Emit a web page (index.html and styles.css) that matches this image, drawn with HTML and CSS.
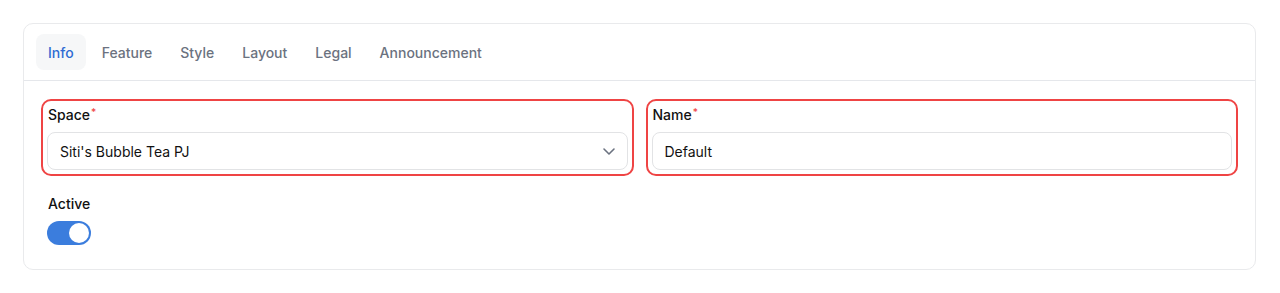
FILE: index.html
```html
<!DOCTYPE html>
<html lang="en">

<head>
    <meta charset="UTF-8">
    <title>Space Settings</title>
    <link rel="stylesheet" href="styles.css">
</head>

<body>

    <div class="card">
        <div class="tabs">
            <button class="tab active">Info</button>
            <button class="tab">Feature</button>
            <button class="tab">Style</button>
            <button class="tab">Layout</button>
            <button class="tab">Legal</button>
            <button class="tab">Announcement</button>
        </div>

        <div class="card-body">
            <div class="field highlight">
                <label class="field-label">Space<span class="req">*</span></label>
                <div class="select">
                    <span>Siti's Bubble Tea PJ</span>
                    <svg width="16" height="16" viewBox="0 0 16 16" fill="none">
                        <path d="M3 6l5 5 5-5" stroke="#6b7280" stroke-width="1.6" stroke-linecap="round" stroke-linejoin="round" />
                    </svg>
                </div>
            </div>

            <div class="field highlight">
                <label class="field-label">Name<span class="req">*</span></label>
                <input class="input" type="text" value="Default">
            </div>

            <div class="field">
                <label class="field-label">Active</label>
                <div class="toggle on"><span class="knob"></span></div>
            </div>
        </div>
    </div>

</body>

</html>
```

FILE: styles.css
```css
* {
    box-sizing: border-box;
}

body {
    font-family: Inter, 'Noto Sans', sans-serif;
    background: #fff;
    margin: 0;
    padding: 23px 24px 0 23px;
    color: #111827;
}

.card {
    background: #fff;
    border: 1px solid #e9eaec;
    border-radius: 10px;
}

.tabs {
    display: flex;
    gap: 4px;
    padding: 10px 12px 10px 12px;
    border-bottom: 1px solid #e5e7eb;
}

.tab {
    font-family: inherit;
    font-size: 14px;
    font-weight: 500;
    height: 36px;
    padding: 0 12px;
    border: none;
    border-radius: 8px;
    background: none;
    color: #6b7280;
    cursor: pointer;
}

.tab.active {
    background: #f6f7f8;
    color: #2f6bd3;
}

.card-body {
    display: grid;
    grid-template-columns: 1fr 1fr;
    gap: 12px;
    padding: 18px 17px 18px 17px;
}

.field {
    display: flex;
    flex-direction: column;
    align-items: flex-start;
    gap: 7px;
    padding: 4px;
    border: 2px solid transparent;
    border-radius: 10px;
}

.field.highlight {
    border-color: #ef4444;
}

.field-label {
    font-size: 14px;
    font-weight: 500;
    line-height: 20px;
    color: #111;
    padding-left: 1px;
}

.req {
    color: #ef4444;
    font-size: 10px;
    vertical-align: top;
    line-height: 14px;
    margin-left: 1px;
}

.select,
.input {
    width: 100%;
    height: 38px;
    border: 1px solid #e2e3e5;
    border-radius: 8px;
    padding: 0 12px;
    font-family: inherit;
    font-size: 14px;
    color: #111;
    background: #fff;
    outline: none;
}

.select {
    display: flex;
    align-items: center;
    justify-content: space-between;
    padding-right: 10px;
}

.toggle {
    width: 44px;
    height: 24px;
    border-radius: 12px;
    background: #d1d5db;
    padding: 2px;
    display: flex;
}

.toggle.on {
    background: #3b7ddd;
    justify-content: flex-end;
}

.knob {
    width: 20px;
    height: 20px;
    border-radius: 50%;
    background: #fff;
}
```
